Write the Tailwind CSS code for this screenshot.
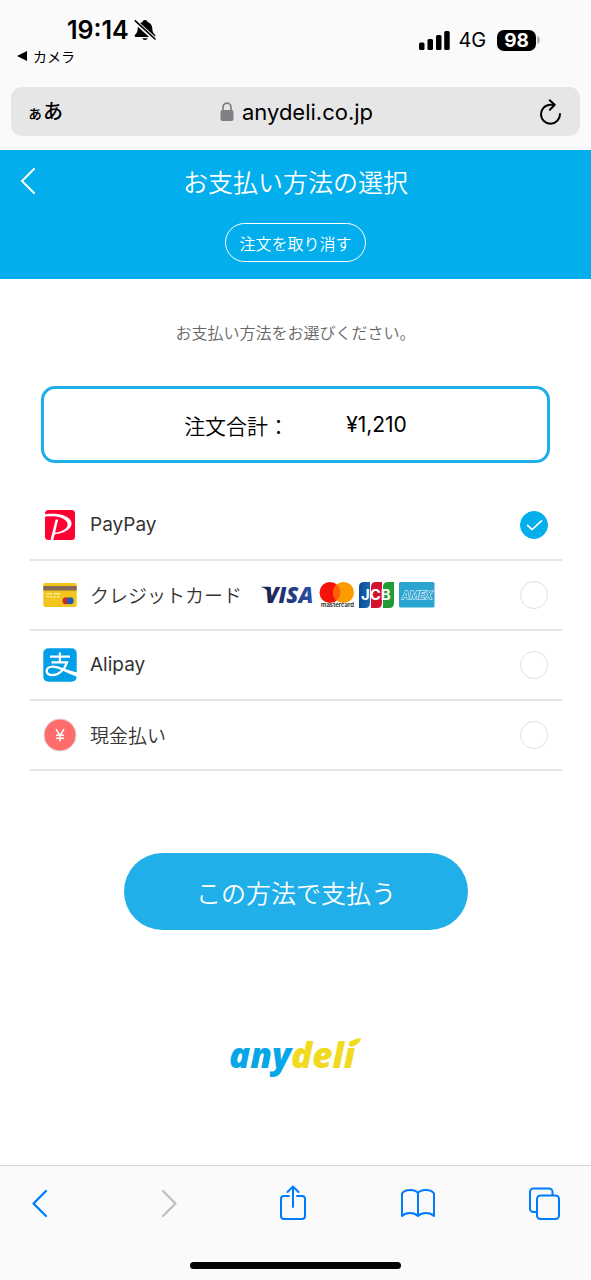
<!DOCTYPE html>
<html lang="ja">
<head>
<meta charset="utf-8">
<meta name="viewport" content="width=device-width, initial-scale=1">
<title>お支払い方法の選択</title>
<script src="https://cdn.jsdelivr.net/npm/@tailwindcss/browser@4"></script>
</head>
<body class="flex min-h-screen flex-col bg-white font-['Inter','Noto_Sans_CJK_JP',sans-serif] text-black">

<!-- Status bar and address bar -->
<div class="bg-[#fafafa] px-[11px] pb-[14px]">
  <div class="flex h-[87px] justify-between pr-[40px] pl-[6px]">
    <div class="flex flex-col pt-[14px]">
      <div class="flex h-8 items-center gap-[5px] pl-[50px]">
        <span class="text-[25px] font-semibold leading-8">19:14</span>
        <svg class="h-[22px] w-[22px]" viewBox="0 0 22 22" aria-hidden="true">
          <path d="M11 1c-1.400 0-2.300.8-2.600 1.900C5.400 3.900 3.700 6.200 3.700 9.500c0 3.200-.8 4.300-2.700 6.200-.8.800-.3 2.200.8 2.200h18.400c1.100 0 1.600-1.400.8-2.200-1.900-1.900-2.700-3-2.700-6.200 0-3.300-1.700-5.600-4.700-6.600C13.300 1.800 12.400 1 11 1zM8.200 19.200a2.900 2.400 0 0 0 5.600 0z"/>
          <path d="M.5 1.800 21 20.500" stroke="#fafafa" stroke-width="4.200"/>
          <path d="M1.300 1.800 21 20" stroke="#000" stroke-width="1.700" stroke-linecap="round"/>
        </svg>
      </div>
      <a href="#" class="flex h-5 items-center gap-[6px] font-['Noto_Sans_CJK_JP',sans-serif] text-[14px] leading-5">
        <svg class="h-[10px] w-[10px]" viewBox="0 0 10 10" aria-hidden="true"><path d="M0 5 10 0v10z"/></svg>
        <span>カメラ</span>
      </a>
    </div>
    <div class="mt-[24px] flex h-8 items-center self-start">
      <svg class="h-[19px] w-[31px]" viewBox="0 0 31 19" aria-hidden="true"><rect x="0" y="11.500" width="5.500" height="7.500" rx="1.500"/><rect x="8.500" y="8" width="5.500" height="11" rx="1.500"/><rect x="17" y="4" width="5.500" height="15" rx="1.500"/><rect x="25.200" y="0" width="5.500" height="19" rx="1.500"/></svg>
      <span class="ml-[8px] text-[20px] leading-6">4G</span>
      <span class="ml-[11px] rounded-[7px] bg-black px-[7px] text-[19px] font-bold leading-[21px] text-white">98</span>
      <svg class="ml-[1px] h-[8px] w-[3px]" viewBox="0 0 3 8" aria-hidden="true"><path d="M0 0c4 1 4 7 0 8z" fill="#b5b5b5"/></svg>
    </div>
  </div>
  <div class="flex h-[49px] items-center justify-between rounded-[11px] bg-[#e6e6e6] pr-[18px] pl-[16px]">
    <button type="button" class="flex w-[54px] items-baseline font-['Noto_Sans_CJK_JP',sans-serif] font-medium leading-8" aria-label="ページ設定"><span class="text-[16px]">ぁ</span><span class="text-[20px]">あ</span></button>
    <div class="flex items-center gap-[8px]">
      <svg class="h-[19px] w-[14px]" viewBox="0 0 14 19" aria-hidden="true"><rect x=".5" y="8" width="13" height="11" rx="2" fill="#808084"/><path d="M3 8.500V5.200a4 4 0 0 1 8 0v3.300" fill="none" stroke="#808084" stroke-width="1.700"/></svg>
      <span class="text-[22px] leading-8">anydeli.co.jp</span>
    </div>
    <button type="button" class="flex w-[50px] justify-end" aria-label="再読み込み">
      <svg class="h-[26px] w-[24px]" viewBox="0 0 24 26" fill="none" stroke="#000" stroke-width="2" stroke-linecap="round" stroke-linejoin="round" aria-hidden="true"><path d="M22 15A9.500 9.500 0 1 1 12.500 5.700h3.700M11.700 1.300l5 4.500-4.800 5"/></svg>
    </button>
  </div>
</div>

<!-- Page header -->
<header class="flex h-[129px] flex-col items-center bg-[#02aeec] font-['Noto_Sans_CJK_JP',sans-serif] text-white">
  <div class="grid h-[62px] w-full grid-cols-[60px_1fr_60px] items-center">
    <a href="#" class="pl-[20px]" aria-label="戻る">
      <svg class="h-[26px] w-[16px]" viewBox="0 0 16 26" fill="none" stroke="currentColor" stroke-width="2" stroke-linecap="round" stroke-linejoin="round" aria-hidden="true"><path d="M14 1 2 13l12 12"/></svg>
    </a>
    <h1 class="text-center text-[25px] font-[350] leading-8">お支払い方法の選択</h1>
  </div>
  <button type="button" class="mt-[11px] h-[39px] rounded-full border-[1px] border-white px-[13px] text-[16px] font-[350] leading-6">注文を取り消す</button>
</header>

<main class="flex flex-1 flex-col items-center pt-[41px]">
  <p class="font-['Noto_Sans_CJK_JP',sans-serif] text-[16px] font-[350] leading-6 text-[#666]">お支払い方法をお選びください。</p>

  <div class="w-full px-[41px] pt-[42px]">
    <div class="flex h-[77px] items-center justify-center gap-[57px] rounded-[14px] border-[3px] border-[#1eaee8] text-[21px] leading-8">
      <span class="font-['Noto_Sans_CJK_JP',sans-serif] font-[350]">注文合計：</span><span>¥1,210</span>
    </div>
  </div>

  <form class="flex w-full flex-col items-center pt-[28px] pr-[29px] pl-[30px]">
    <div class="w-full text-[19px] leading-8 text-[#333]">
      <label class="flex h-[70px] items-center border-b-2 border-[#e5e5e5] pr-[14px] pl-[13px]">
        <svg class="h-[34px] w-[34px]" viewBox="0 0 34 34" aria-hidden="true">
          <rect x="2" y="2" width="30" height="30" rx="3.500" fill="#ff0033"/>
          <path d="M2 6.300C12 5 23 6.500 27 11.500c5.500 7-4 14.500-17 14.800l.4-1.600C20 24.500 27.500 19 23.500 13.500 20.500 9 11 7.500 2 8.700z" fill="#fff"/>
          <path d="M12.600 11.500h2.600L10.300 32H7.500z" fill="#fff"/>
        </svg>
        <span class="ml-[13px]">PayPay</span>
        <span class="relative ml-auto flex">
          <input type="radio" name="pay" checked class="peer h-7 w-7 appearance-none rounded-full border-[1px] border-[#e0e0e0] checked:border-[#02aeec] checked:bg-[#02aeec]">
          <svg class="pointer-events-none absolute inset-0 hidden h-7 w-7 peer-checked:block" viewBox="0 0 28 28" fill="none" stroke="#fff" stroke-width="1.700" stroke-linecap="round" stroke-linejoin="round" aria-hidden="true"><path d="M7.500 14.300l4.700 4.200L21.500 9.800"/></svg>
        </span>
      </label>
      <label class="flex h-[70px] items-center border-b-2 border-[#e5e5e5] pr-[14px] pl-[13px]">
        <svg class="h-[34px] w-[34px]" viewBox="0 0 34 34" aria-hidden="true">
          <rect x=".3" y="5" width="33.400" height="24" rx="2" fill="#f1c51b"/>
          <rect x=".3" y="8" width="33.400" height="4.500" fill="#846b57"/>
          <path d="M3.500 15.700h13.500" stroke="#fae69a" stroke-width="1.400" stroke-dasharray="6 1.500"/>
          <path d="M3.500 18.800h13.500" stroke="#fae69a" stroke-width="1.400" stroke-dasharray="2.500 1"/>
          <circle cx="23" cy="22.700" r="3.500" fill="#d6232a"/><circle cx="27.200" cy="22.700" r="3.500" fill="#1f5bae"/>
        </svg>
        <span class="ml-[13px] font-['Noto_Sans_CJK_JP',sans-serif] font-[350]">クレジットカード</span>
        <svg class="ml-[18px] h-[28px] w-[176px]" viewBox="0 0 176 28" role="img" aria-label="VISA mastercard JCB AMEX">
          <defs><linearGradient id="visa" x1="0" x2="1"><stop offset="0" stop-color="#1b2050"/><stop offset="1" stop-color="#2b52a6"/></linearGradient>
          <linearGradient id="jb" x1="0" x2="1"><stop offset="0" stop-color="#0e4a93"/><stop offset="1" stop-color="#1769b7"/></linearGradient></defs>
          <path d="M1 5.700h8l4.500 15L9.500 13C8 9 5 7 1 6z" fill="#1b2050"/>
          <text x="5" y="22" font-family="Open Sans" font-size="22" font-weight="800" font-style="italic" fill="url(#visa)">VISA</text>
          <circle cx="70" cy="11.500" r="10.500" fill="#f5120c"/><circle cx="83.500" cy="11.500" r="10.500" fill="#fb9d00"/>
          <path d="M76.700 3.500a10.500 10.500 0 0 1 0 16 10.500 10.500 0 0 1 0-16z" fill="#fb6009"/>
          <text x="61" y="26" font-family="Inter" font-size="6" font-weight="600" fill="#222">mastercard</text>
          <path d="M104 1h6v21q0 5-5 5h-6V6q0-5 5-5z" fill="url(#jb)"/>
          <path d="M116 1h6v21q0 5-5 5h-6V6q0-5 5-5z" fill="#d3122f"/>
          <path d="M128 1h6v21q0 5-5 5h-6V6q0-5 5-5z" fill="#219b36"/>
          <text x="101" y="19" font-family="Inter" font-size="15" font-weight="700" fill="#fff">JCB</text>
          <rect x="139" y="1" width="35.500" height="25.500" rx="1.500" fill="#2aa5d2"/>
          <text x="142" y="18" font-family="Inter" font-size="10" font-weight="700" font-style="italic" fill="#2aa5d2" stroke="#fff" stroke-width="1" paint-order="stroke">AMEX</text>
        </svg>
        <input type="radio" name="pay" class="ml-auto h-7 w-7 appearance-none rounded-full border-[1px] border-[#e0e0e0] checked:border-[#02aeec] checked:bg-[#02aeec]">
      </label>
      <label class="flex h-[70px] items-center border-b-2 border-[#e5e5e5] pr-[14px] pl-[13px]">
        <svg class="h-[34px] w-[34px]" viewBox="0 0 34 34" aria-hidden="true">
          <rect x=".3" y=".3" width="33.400" height="33.400" rx="5" fill="#029fe8"/>
          <path d="M16.900 4.500v9.500M7 8.700h20M8.500 14.400h15.500C22 21 16 27.200 9.700 27.200c-4 0-6-1.800-6-4.200 0-2.500 2.200-4.400 5.800-4.400 6 0 12 3.800 24.500 7.700" fill="none" stroke="#fff" stroke-width="2.300"/>
          <path d="M19.500 20.400l14.500 4v4.400c-5-1.800-10.500-4.300-14.500-6.300z" fill="#fff"/>
        </svg>
        <span class="ml-[13px]">Alipay</span>
        <input type="radio" name="pay" class="ml-auto h-7 w-7 appearance-none rounded-full border-[1px] border-[#e0e0e0] checked:border-[#02aeec] checked:bg-[#02aeec]">
      </label>
      <label class="flex h-[70px] items-center border-b-2 border-[#e5e5e5] pr-[14px] pl-[13px]">
        <svg class="h-[34px] w-[34px]" viewBox="0 0 34 34" aria-hidden="true">
          <circle cx="17" cy="17" r="16" fill="#ff6c6c" stroke="#dccccc" stroke-width="1"/>
          <path d="M13 11.200l4 6.300 4-6.300M17 17.500v6M13 17.300h8M13 20.300h8" fill="none" stroke="#fff" stroke-width="1.500"/>
        </svg>
        <span class="ml-[13px] font-['Noto_Sans_CJK_JP',sans-serif] font-[350]">現金払い</span>
        <input type="radio" name="pay" class="ml-auto h-7 w-7 appearance-none rounded-full border-[1px] border-[#e0e0e0] checked:border-[#02aeec] checked:bg-[#02aeec]">
      </label>
    </div>
    <button type="submit" class="mt-[82px] h-[77px] w-[344px] rounded-full bg-[#20afe9] font-['Noto_Sans_CJK_JP',sans-serif] text-[25px] font-[350] leading-8 text-white">この方法で支払う</button>
  </form>

  <svg class="mt-[106px] h-[46px] w-[134px] overflow-visible" viewBox="0 0 134 46" role="img" aria-label="anydeli">
    <text x="0" y="32" font-family="Open Sans" font-size="35" font-weight="800" font-style="italic" fill="#07a6e6">any<tspan fill="#f1da22">deli</tspan></text>
    <path d="M120 10c1-5 4-7 12-8-1 5-4 8-12 8z" fill="#f1da22"/>
  </svg>
</main>

<!-- Browser toolbar -->
<footer class="flex h-[115px] flex-col items-center border-t-[1px] border-[#d8d8d8] bg-[#fafafa]">
  <nav class="flex w-full items-center justify-between pt-[18px] pr-[30px] pl-[24px] text-[#007aff]">
    <button type="button" aria-label="戻る"><svg class="h-[38px] w-[34px]" viewBox="0 0 34 38" fill="none" stroke="currentColor" stroke-width="2.300" stroke-linecap="round" stroke-linejoin="round"><path d="M22 7 9.500 19.500 22 32"/></svg></button>
    <button type="button" disabled class="text-[#bfbfbf]" aria-label="進む"><svg class="h-[38px] w-[34px]" viewBox="0 0 34 38" fill="none" stroke="currentColor" stroke-width="2.300" stroke-linecap="round" stroke-linejoin="round"><path d="M13 7 25.500 19.500 13 32"/></svg></button>
    <button type="button" aria-label="共有"><svg class="h-[38px] w-[34px]" viewBox="-3 0 34 38" fill="none" stroke="currentColor" stroke-width="2" stroke-linecap="round" stroke-linejoin="round"><path d="M10 12H5a3 3 0 0 0-3 3v17a3 3 0 0 0 3 3h18a3 3 0 0 0 3-3V15a3 3 0 0 0-3-3h-5M14 23V3M8.500 8 14 2.500 19.500 8"/></svg></button>
    <button type="button" aria-label="ブックマーク"><svg class="h-[38px] w-[34px]" viewBox="0 0 34 38" fill="none" stroke="currentColor" stroke-width="2" stroke-linecap="round" stroke-linejoin="round"><path d="M17 9v23M17 9c-2.500-4-13-4.500-16 .5V32c4-4 12-4 16 0 4-4 12-4 16 0V9.500C30 4.500 19.500 5 17 9z"/></svg></button>
    <button type="button" aria-label="タブ"><svg class="h-[38px] w-[34px]" viewBox="-2 0 34 38" fill="none" stroke="currentColor" stroke-width="2" stroke-linejoin="round"><rect x="8" y="11.500" width="22" height="23.500" rx="3.500"/><path d="M8 28H4.500A3.500 3.500 0 0 1 1 24.500V8a3.500 3.500 0 0 1 3.500-3.500H20A3.500 3.500 0 0 1 23.500 8v3.500"/></svg></button>
  </nav>
  <div class="mt-auto mb-[11px] h-[7px] w-[211px] rounded-full bg-black"></div>
</footer>
</body>
</html>
